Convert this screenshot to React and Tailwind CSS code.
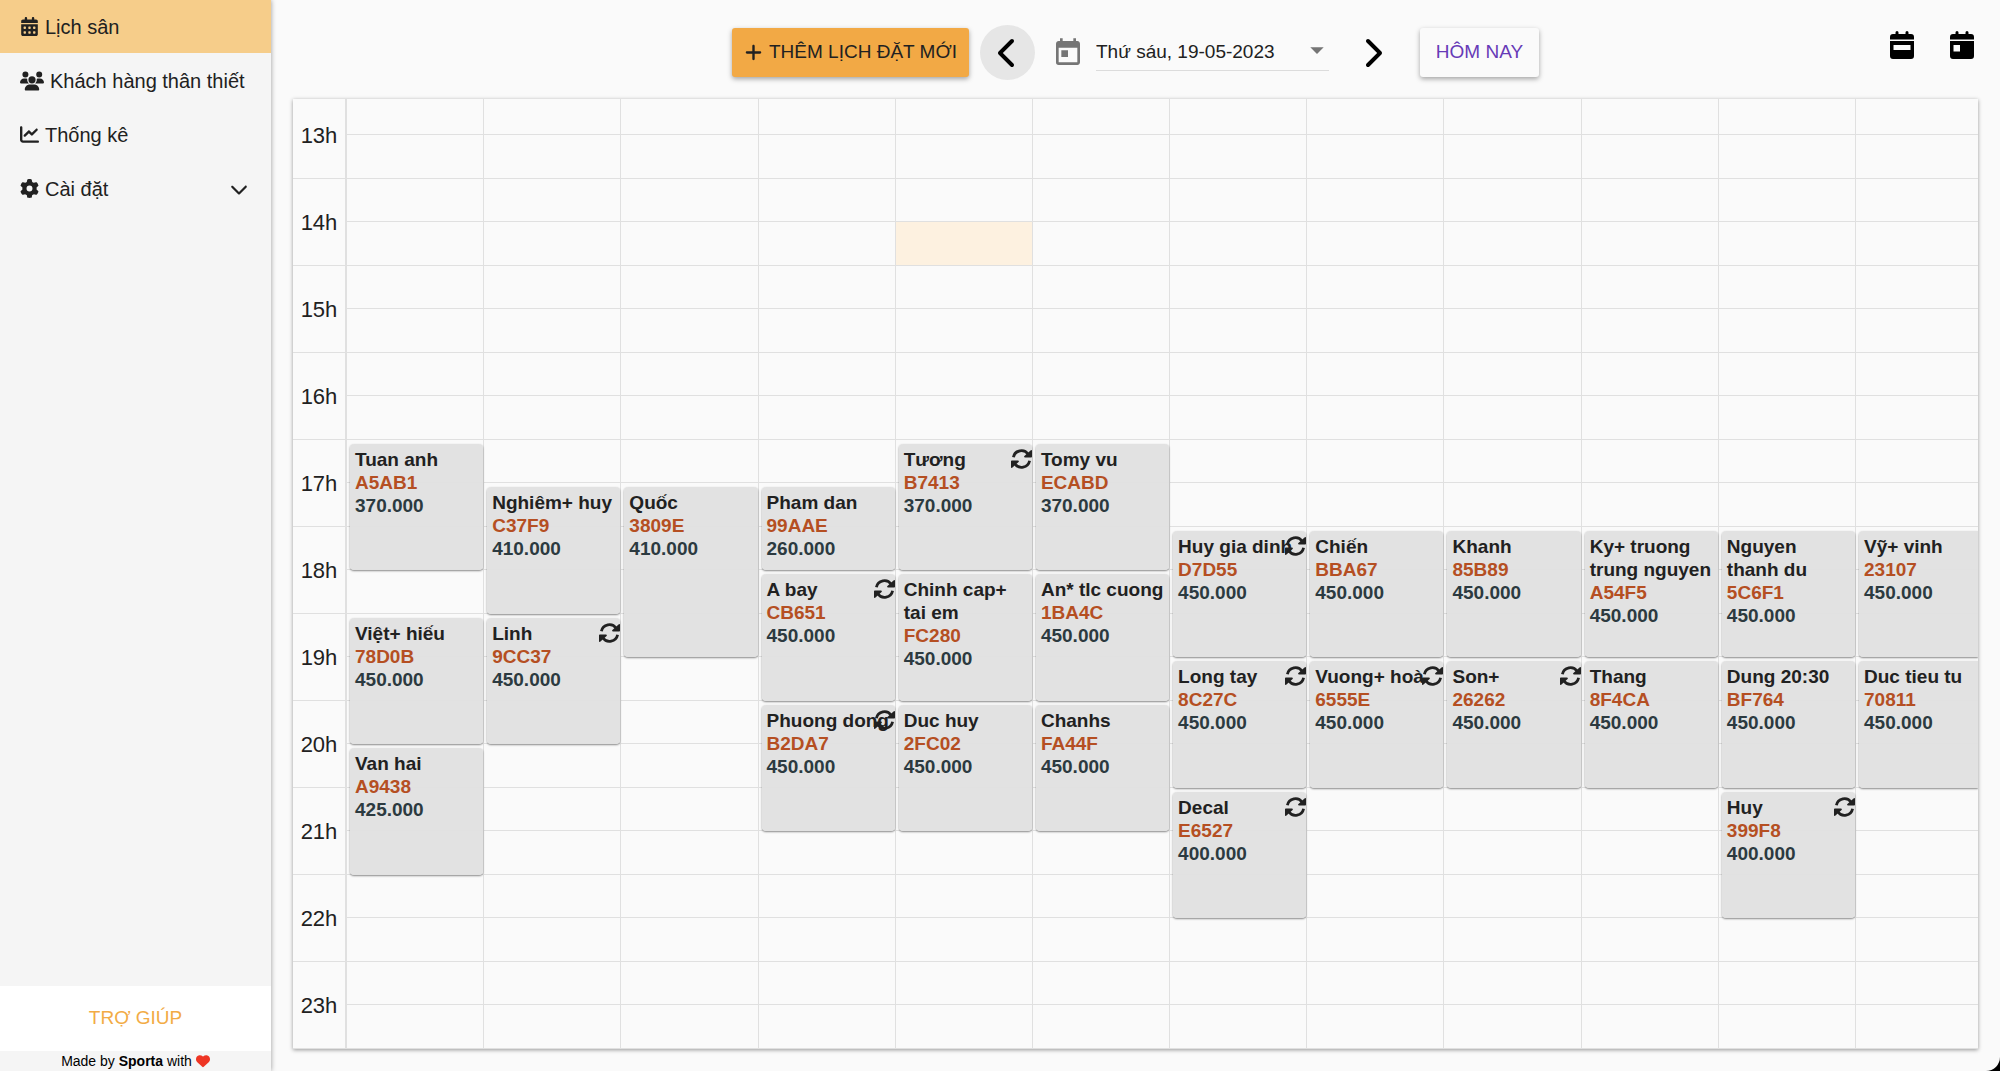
import React, { useState } from 'react';
import {
  FaCalendarDays,
  FaChartLine,
  FaChevronDown,
  FaChevronLeft,
  FaChevronRight,
  FaGear,
  FaHeart,
  FaPlus,
  FaUsers,
} from 'react-icons/fa6';
import { MdArrowDropDown, MdToday } from 'react-icons/md';

const menuItems = [
  { label: 'Lịch sân', icon: FaCalendarDays, active: true },
  { label: 'Khách hàng thân thiết', icon: FaUsers, wide: true },
  { label: 'Thống kê', icon: FaChartLine },
  { label: 'Cài đặt', icon: FaGear, expandable: true },
];

const hours = [13, 14, 15, 16, 17, 18, 19, 20, 21, 22, 23];
const courts = [1, 2, 3, 4, 5, 6, 7, 8, 9, 10, 11, 12];
const FIRST_SLOT = 12.5;
const SLOTS = 22;

// start and end are in hours
const bookings = [
  { court: 1, start: 16.5, end: 18, name: 'Tuan anh', code: 'A5AB1', price: '370.000' },
  { court: 1, start: 18.5, end: 20, name: 'Việt+ hiếu', code: '78D0B', price: '450.000' },
  { court: 1, start: 20, end: 21.5, name: 'Van hai', code: 'A9438', price: '425.000' },
  { court: 2, start: 17, end: 18.5, name: 'Nghiêm+ huy', code: 'C37F9', price: '410.000' },
  { court: 2, start: 18.5, end: 20, name: 'Linh', code: '9CC37', price: '450.000', repeat: true },
  { court: 3, start: 17, end: 19, name: 'Quốc', code: '3809E', price: '410.000' },
  { court: 4, start: 17, end: 18, name: 'Pham dan', code: '99AAE', price: '260.000' },
  { court: 4, start: 18, end: 19.5, name: 'A bay', code: 'CB651', price: '450.000', repeat: true },
  { court: 4, start: 19.5, end: 21, name: 'Phuong dong', code: 'B2DA7', price: '450.000', repeat: true },
  { court: 5, start: 16.5, end: 18, name: 'Tương', code: 'B7413', price: '370.000', repeat: true },
  { court: 5, start: 18, end: 19.5, name: 'Chinh cap+ tai em', code: 'FC280', price: '450.000' },
  { court: 5, start: 19.5, end: 21, name: 'Duc huy', code: '2FC02', price: '450.000' },
  { court: 6, start: 16.5, end: 18, name: 'Tomy vu', code: 'ECABD', price: '370.000' },
  { court: 6, start: 18, end: 19.5, name: 'An* tlc cuong', code: '1BA4C', price: '450.000' },
  { court: 6, start: 19.5, end: 21, name: 'Chanhs', code: 'FA44F', price: '450.000' },
  { court: 7, start: 17.5, end: 19, name: 'Huy gia dinh', code: 'D7D55', price: '450.000', repeat: true },
  { court: 7, start: 19, end: 20.5, name: 'Long tay', code: '8C27C', price: '450.000', repeat: true },
  { court: 7, start: 20.5, end: 22, name: 'Decal', code: 'E6527', price: '400.000', repeat: true },
  { court: 8, start: 17.5, end: 19, name: 'Chiến', code: 'BBA67', price: '450.000' },
  { court: 8, start: 19, end: 20.5, name: 'Vuong+ hoà', code: '6555E', price: '450.000', repeat: true },
  { court: 9, start: 17.5, end: 19, name: 'Khanh', code: '85B89', price: '450.000' },
  { court: 9, start: 19, end: 20.5, name: 'Son+', code: '26262', price: '450.000', repeat: true },
  { court: 10, start: 17.5, end: 19, name: 'Ky+ truong trung nguyen', code: 'A54F5', price: '450.000' },
  { court: 10, start: 19, end: 20.5, name: 'Thang', code: '8F4CA', price: '450.000' },
  { court: 11, start: 17.5, end: 19, name: 'Nguyen thanh du', code: '5C6F1', price: '450.000' },
  { court: 11, start: 19, end: 20.5, name: 'Dung 20:30', code: 'BF764', price: '450.000' },
  { court: 11, start: 20.5, end: 22, name: 'Huy', code: '399F8', price: '400.000', repeat: true },
  { court: 12, start: 17.5, end: 19, name: 'Vỹ+ vinh', code: '23107', price: '450.000' },
  { court: 12, start: 19, end: 20.5, name: 'Duc tieu tu', code: '70811', price: '450.000' },
];

const toRow = (hour) => (hour - FIRST_SLOT) * 2 + 1;

const CalendarWeekIcon = () => (
  <svg className="w-6 h-7" viewBox="0 0 24 28" fill="currentColor">
    <path d="M5.500 1.500a1.500 1.500 0 013 0V3h7V1.500a1.500 1.500 0 013 0V3H21a3 3 0 013 3v2.500H0V6a3 3 0 013-3h2.500z" />
    <path fillRule="evenodd" d="M0 10h24v15a3 3 0 01-3 3H3a3 3 0 01-3-3zM3.500 14v5h17v-5z" />
  </svg>
);

const CalendarDayIcon = () => (
  <svg className="w-6 h-7" viewBox="0 0 24 28" fill="currentColor">
    <path d="M5.500 1.500a1.500 1.500 0 013 0V3h7V1.500a1.500 1.500 0 013 0V3H21a3 3 0 013 3v2.500H0V6a3 3 0 013-3h2.500z" />
    <path fillRule="evenodd" d="M0 10h24v15a3 3 0 01-3 3H3a3 3 0 01-3-3zM3.500 14v6.500h6.500v-6.500z" />
  </svg>
);

const RepeatIcon = ({ className }) => (
  <svg className={className} viewBox="0 0 21 20" fill="none">
    <path
      d="M2.400 8.200A8.200 8.200 0 0117.200 5.200M18.600 11.800A8.200 8.200 0 013.800 14.800"
      stroke="currentColor"
      strokeWidth="2.800"
    />
    <path
      d="M20.100 1a.8.8 0 01.9.8V7.700a.8.8 0 01-.8.8H14a.8.8 0 01-.6-1.400zM.9 19a.8.8 0 01-.9-.8V12.300a.8.8 0 01.8-.8H7a.8.8 0 01.6 1.400z"
      fill="currentColor"
    />
  </svg>
);

const Sidebar = () => (
  <aside className="relative z-10 flex flex-col shrink-0 w-[271px] bg-[#f5f5f5] shadow-[0_0_5px_rgba(0,0,0,0.4)]">
    <nav className="flex flex-col flex-1 gap-px">
      {menuItems.map((item) => (
        <a
          key={item.label}
          href="#"
          className={`flex items-center h-[53px] pl-5 pr-[23px] text-[20px] whitespace-nowrap text-[#212121] ${
            item.active ? 'bg-[#f6cd8a]' : 'hover:bg-gray-200'
          }`}
        >
          <item.icon
            className={`mr-[6px] shrink-0 ${item.wide ? 'w-6 h-6' : 'w-[19px] h-[19px]'}`}
          />
          <span>{item.label}</span>
          {item.expandable && <FaChevronDown className="ml-auto text-[18px]" />}
        </a>
      ))}
    </nav>
    <button className="h-[65px] bg-white text-[19px] text-[#f2ab45]">TRỢ GIÚP</button>
    <p className="flex items-center justify-center h-5 text-sm text-black">
      <span>
        Made by <b>Sporta</b> with
      </span>
      <FaHeart className="ml-1 text-[#ee3524]" />
    </p>
  </aside>
);

const Toolbar = () => {
  const [date, setDate] = useState('2023-05-19');

  return (
    <header className="grid grid-cols-[1fr_auto_1fr] h-[99px] pt-[25px] shrink-0">
      <div className="col-start-2 flex items-center self-start">
        <button className="flex items-center justify-center gap-[6px] w-[237px] h-[49px] mr-[11px] rounded-[3px] bg-[#f2a945] text-[19px] whitespace-nowrap text-[#212121] shadow-[0_2px_5px_rgba(0,0,0,0.35)]">
          <FaPlus className="text-[19px]" />
          <span>THÊM LỊCH ĐẶT MỚI</span>
        </button>
        <button
          aria-label="Ngày trước"
          className="flex items-center justify-center w-[55px] h-[55px] mr-[17px] rounded-full bg-[#e6e6e6] text-black text-[32px]"
        >
          <FaChevronLeft />
        </button>
        <MdToday className="mr-3 text-[32px] text-[#757575]" />
        <div className="relative w-[233px] mr-[15px]">
          <select
            aria-label="Chọn ngày"
            value={date}
            onChange={(e) => setDate(e.target.value)}
            className="appearance-none w-full h-9 border-b border-[#dcdcdc] bg-transparent text-[19px] text-[#212121] outline-none"
          >
            <option value="2023-05-19">Thứ sáu, 19-05-2023</option>
            <option value="2023-05-20">Thứ bảy, 20-05-2023</option>
          </select>
          <MdArrowDropDown className="absolute -right-1 -top-px text-[32px] text-[#757575] pointer-events-none" />
        </div>
        <button
          aria-label="Ngày sau"
          className="flex items-center justify-center w-[55px] h-[55px] mr-[21px] rounded-full text-black text-[32px]"
        >
          <FaChevronRight />
        </button>
        <button className="w-[119px] h-[49px] rounded-[3px] bg-[#fafafa] text-[19px] text-[#673ab7] shadow-[0_2px_5px_rgba(0,0,0,0.35)]">
          HÔM NAY
        </button>
      </div>
      <div className="flex items-start justify-end gap-9 pt-[6px] pr-1 text-black">
        <button aria-label="Xem theo tuần">
          <CalendarWeekIcon />
        </button>
        <button aria-label="Xem theo ngày">
          <CalendarDayIcon />
        </button>
      </div>
    </header>
  );
};

const Booking = ({ booking }) => (
  <button
    className={`relative flex flex-col items-start mt-1 ml-[3px] pt-1 pl-[5px] pr-[3px] bg-[#e0e0e0]/95 text-left text-[19px] leading-[23px] font-bold shadow-[0_1px_2px_rgba(0,0,0,0.45)] ${
      booking.court === 12 ? 'rounded-l-[4px]' : 'mr-px rounded-[4px]'
    }`}
    style={{
      gridColumn: booking.court + 1,
      gridRow: `${toRow(booking.start)} / ${toRow(booking.end)}`,
    }}
  >
    <span className="text-[#212121]">{booking.name}</span>
    <span className="text-[#b54f22]">{booking.code}</span>
    <span className="text-[#2c3a40]">{booking.price}</span>
    {booking.repeat && (
      <RepeatIcon className="absolute right-0 top-[5px] w-[21px] h-5 text-[#212121]" />
    )}
  </button>
);

const Schedule = () => (
  <div className="grid flex-1 overflow-hidden grid-cols-[54px_repeat(11,minmax(0,9fr))_minmax(0,8fr)] grid-rows-[36px_repeat(21,minmax(0,1fr))] shadow-[0_1px_4px_rgba(0,0,0,0.4)]">
    {hours.map((hour, index) => (
      <div
        key={hour}
        className="flex items-end justify-center pb-[28px] border-b border-r-2 border-[#e0e0e0] text-[22px] leading-[28px] text-[#212121]"
        style={{ gridColumn: 1, gridRow: `${index * 2 + 1} / span 2` }}
      >
        {hour}h
      </div>
    ))}
    {courts.map((court) =>
      Array.from({ length: SLOTS }, (_, slot) => (
        <div
          key={`${court}-${slot}`}
          className={`border-b border-[#e0e0e0] ${court < 12 ? 'border-r' : ''} ${
            court === 5 && slot === 3 ? 'bg-[#fdf1e0]' : ''
          }`}
          style={{ gridColumn: court + 1, gridRow: slot + 1 }}
        />
      ))
    )}
    {bookings.map((booking) => (
      <Booking key={booking.code} booking={booking} />
    ))}
  </div>
);

const App = () => (
  <div className="flex min-h-screen bg-black font-['Liberation_Sans',Arial,sans-serif]">
    <Sidebar />
    <main className="flex flex-col flex-1 min-w-0 pl-[22px] pr-[22px] pb-[22px] rounded-br-[14px] bg-[#fafafa]">
      <Toolbar />
      <Schedule />
    </main>
  </div>
);

export default App;
